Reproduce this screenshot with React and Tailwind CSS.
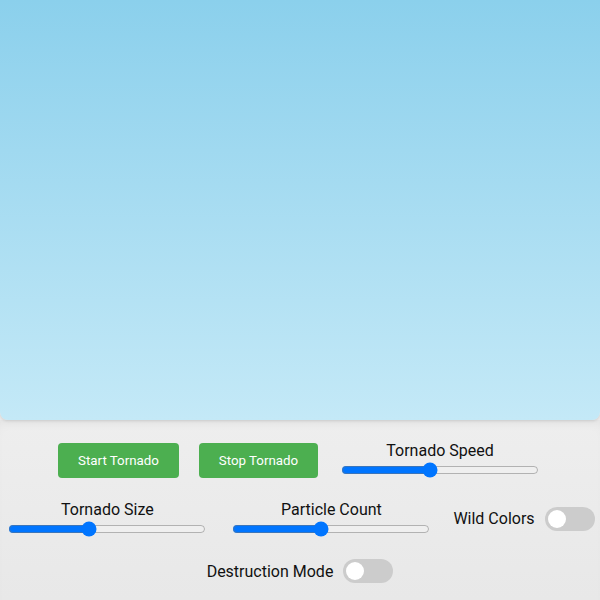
import React, { useState } from "react";

function Slider({ label, min, max, value }) {
  const [v, setV] = useState(value);
  return (
    <div className="flex w-[204px] flex-col items-center">
      <label className="text-[16px] leading-[19px] text-[#111]">{label}</label>
      <input
        type="range"
        min={min}
        max={max}
        value={v}
        onChange={(e) => setV(Number(e.target.value))}
        className="m-0 mt-[2px] h-[16px] w-[198px]"
      />
    </div>
  );
}

function Toggle({ label }) {
  const [on, setOn] = useState(false);
  return (
    <div className="flex items-center gap-[10px]">
      <span className="text-[16px] leading-[19px] text-[#111]">{label}</span>
      <button
        onClick={() => setOn(!on)}
        className={`relative h-[24px] w-[50px] rounded-full ${on ? "bg-[#4CAF50]" : "bg-[#cccccc]"}`}
      >
        <span
          className={`absolute top-[3px] h-[18px] w-[18px] rounded-full bg-white ${on ? "left-[29px]" : "left-[3px]"}`}
        />
      </button>
    </div>
  );
}

export default function App() {
  return (
    <div className="flex h-[600px] w-[600px] flex-col overflow-hidden bg-[#ebebeb] font-['Roboto',sans-serif]">
      <div className="relative z-10 h-[420px] w-full shrink-0 rounded-b-[8px] bg-gradient-to-b from-[#8bd0ec] to-[#c4e9f7] shadow-[0_1px_3px_rgba(0,0,0,0.12)]" />
      <div className="flex flex-1 flex-col gap-[22px] bg-gradient-to-b from-[#eeeeee] to-[#e8e8e8] pt-[21px] shadow-[inset_0_8px_12px_-6px_rgba(0,0,0,0.06)]">
        <div className="flex h-[37px] items-center justify-center gap-x-[20px]">
          <button className="mt-[2px] h-[35px] w-[121px] rounded-[4px] bg-[#4CAF50] text-[13.333px] text-white">
            Start Tornado
          </button>
          <button className="mt-[2px] h-[35px] w-[119px] rounded-[4px] bg-[#4CAF50] text-[13.333px] text-white">
            Stop Tornado
          </button>
          <Slider label="Tornado Speed" min={1} max={10} value={5} />
        </div>
        <div className="flex h-[37px] items-center justify-center gap-x-[20px]">
          <Slider label="Tornado Size" min={0} max={100} value={40} />
          <Slider label="Particle Count" min={100} max={1000} value={500} />
          <Toggle label="Wild Colors" />
        </div>
        <div className="flex h-[24px] items-center justify-center">
          <Toggle label="Destruction Mode" />
        </div>
      </div>
    </div>
  );
}
